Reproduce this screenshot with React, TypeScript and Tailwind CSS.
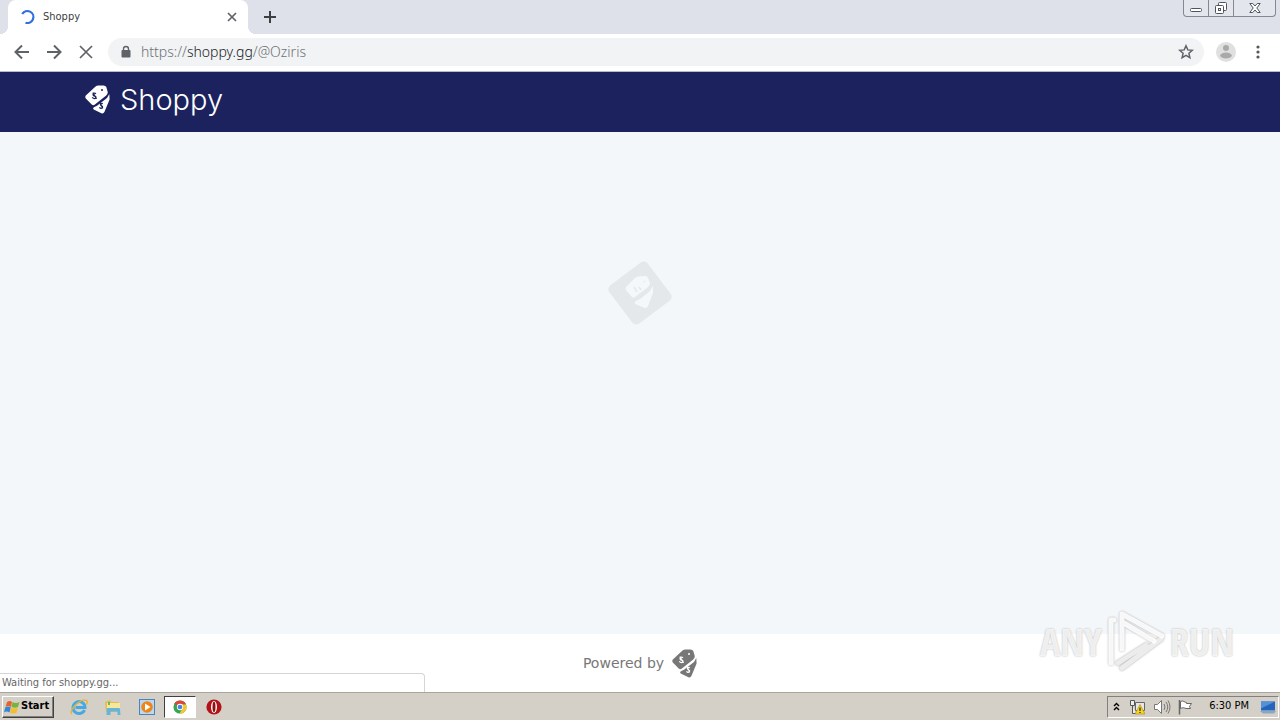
import React from "react";

const UI = "font-['Tahoma','DejaVu_Sans_Condensed','Noto_Sans',sans-serif]";

function Tags({ className, ink }: { className: string; ink: string }) {
  return (
    <svg viewBox="0 0 25 29" className={className} fill="currentColor" aria-hidden="true">
      <path d="M10 2Q11 .6 13 .5L18.500 .4Q20.500 .4 21.300 2L22.600 6.500Q23.200 9 21.200 10.500L9.600 19.800Q8 20.800 6.700 19.400L.8 13.600Q-.2 12 .8 10.600Z" />
      <path d="M24.300 9L24.600 14.500 19.400 27Q18.400 29 16.400 28.300L8.700 24.600Q7.400 23.400 8.800 22.200L12 20.800 22 13Z" />
      <circle cx="17" cy="5" r="1" fill={ink} />
      <g fill="none" stroke={ink} strokeWidth="1.200">
        <path d="M11 8.900C9.300 7.300 7.300 9 8.300 10.300S11.200 10.700 11 12.400 8.600 13.900 7.200 12.300M7.800 7.600l3.800 6.200" />
        <path d="M17.800 18.600C16 17.800 14.800 19.300 15.800 20.300S18 20.900 17.600 22.300 15.400 23.600 14.400 22.300M15.300 17.800l2.300 5.600" />
      </g>
    </svg>
  );
}

function TabStrip() {
  return (
    <div className="flex h-[34px] bg-[#dee1e9] pl-2">
      <div className="relative flex w-60 items-center rounded-t-lg bg-white pr-2 pl-3">
        <span className="absolute bottom-0 -left-2 h-2 w-2 bg-[radial-gradient(circle_at_0_0,#dee1e9_8px,white_8px)]" />
        <span className="absolute -right-2 bottom-0 h-2 w-2 bg-[radial-gradient(circle_at_100%_0,#dee1e9_8px,white_8px)]" />
        <svg viewBox="0 0 16 16" className="h-4 w-4" fill="none" stroke="#2f6fdf" strokeWidth="2.200" aria-hidden="true">
          <path d="M2.200 5A6 6 0 1 1 5.500 13.700" />
        </svg>
        <span className="ml-[7px] flex-1 text-[11px] text-[#3c4043]">Shoppy</span>
        <button aria-label="Close tab" className="flex h-4 w-4 items-center justify-center">
          <svg viewBox="0 0 10 10" className="h-[10px] w-[10px]" stroke="#5f6368" strokeWidth="1.700"><path d="M1 1l8 8M9 1L1 9" /></svg>
        </button>
      </div>
      <button aria-label="New tab" className="ml-4 flex w-3 items-center justify-center">
        <svg viewBox="0 0 12 12" className="h-3 w-3" stroke="#3c4043" strokeWidth="2"><path d="M6 0v12M0 6h12" /></svg>
      </button>
      <div className="mr-1 ml-auto flex h-[17px] overflow-hidden rounded-b-[4px] border border-t-0 border-[#85888f] bg-[#e3e6ec]">
        <button aria-label="Minimize" className="flex w-[25px] items-center justify-center border-r border-[#85888f]">
          <svg viewBox="0 0 24 16" className="h-4 w-6" fill="#fff" stroke="#50545c"><rect x="6.500" y="8.500" width="11" height="3" rx="1" /></svg>
        </button>
        <button aria-label="Restore" className="flex w-[25px] items-center justify-center border-r border-[#85888f]">
          <svg viewBox="0 0 14 14" className="h-[14px] w-[14px]" fill="#fff" stroke="#50545c"><rect x="4.500" y="1.500" width="8" height="8" rx="1" /><rect x="1.500" y="4.500" width="8" height="8" rx="1" /><rect x="4.500" y="7.500" width="2" height="2" /></svg>
        </button>
        <button aria-label="Close" className="flex w-[41px] items-center justify-center">
          <svg viewBox="0 0 12 12" className="h-3 w-3" fill="#fff" stroke="#50545c"><path d="M.8 1.500h3L6 4l2.200-2.500h3L7.800 6l3.400 4.500h-3L6 8l-2.200 2.500h-3L4.200 6z" /></svg>
        </button>
      </div>
    </div>
  );
}

function Toolbar() {
  return (
    <div className="flex h-[38px] items-center border-b border-[#b9bcc5] bg-white pr-[14px] pb-px pl-[14px]">
      <div className="flex gap-4 text-[#5f6368]">
        <button aria-label="Back"><svg viewBox="0 0 16 16" className="h-4 w-4" fill="none" stroke="currentColor" strokeWidth="2"><path d="M15 8H2M8 1.500L1.500 8 8 14.500" /></svg></button>
        <button aria-label="Forward"><svg viewBox="0 0 16 16" className="h-4 w-4" fill="none" stroke="currentColor" strokeWidth="2"><path d="M1 8h13M8 1.500L14.500 8 8 14.500" /></svg></button>
        <button aria-label="Stop"><svg viewBox="0 0 16 16" className="h-4 w-4" stroke="currentColor" strokeWidth="1.700"><path d="M2 2l12 12M14 2L2 14" /></svg></button>
      </div>
      <div className="ml-[14px] flex h-7 flex-1 items-center rounded-full bg-[#f1f3f4] pr-[10px] pl-3">
        <svg viewBox="0 0 12 14" className="h-[14px] w-3" aria-hidden="true"><rect x="1.500" y="5" width="9" height="7.500" rx="1" fill="#5f6368" /><path d="M3.500 5.500V4a2.500 2.500 0 0 1 5 0v1.500" fill="none" stroke="#5f6368" strokeWidth="1.400" /></svg>
        <a href="#" className="ml-[9px] flex-1 font-['Noto_Sans',sans-serif] text-[14px] leading-5 font-light text-[#6d7176]">
          https://<span className="text-[#202124]">shoppy.gg</span>/@Oziris
        </a>
        <button aria-label="Bookmark this page">
          <svg viewBox="0 0 16 16" className="h-4 w-4" fill="none" stroke="#5f6368" strokeWidth="1.500"><path d="M8 1.800l1.800 4.100 4.500.4-3.400 3 1 4.400L8 11.400l-3.900 2.300 1-4.400-3.400-3 4.500-.4z" /></svg>
        </button>
      </div>
      <button aria-label="Profile" className="ml-3">
        <svg viewBox="0 0 20 20" className="h-5 w-5"><circle cx="10" cy="10" r="10" fill="#e0e0e0" /><circle cx="10" cy="6" r="3" fill="#a9a9a9" /><ellipse cx="10" cy="13.500" rx="5.800" ry="3" fill="#a9a9a9" /></svg>
      </button>
      <button aria-label="Menu" className="ml-[14px]">
        <svg viewBox="0 0 16 16" className="h-4 w-4" fill="#55595e"><circle cx="8" cy="3" r="1.600" /><circle cx="8" cy="8" r="1.600" /><circle cx="8" cy="13" r="1.600" /></svg>
      </button>
    </div>
  );
}

function Watermark() {
  const text = "font-['Liberation_Sans_Narrow','Open_Sans_Condensed','Noto_Sans_ExtraCondensed','Roboto_Condensed','Liberation_Sans',sans-serif] text-[38px] font-light leading-none text-white/80 [text-shadow:0_0_2px_#aaa]";
  return (
    <div className="pointer-events-none absolute right-[46px] bottom-[19px] flex items-center gap-1">
      <span className={text}>ANY</span>
      <svg viewBox="0 0 60 64" className="h-16 w-[60px] drop-shadow-[0_0_1px_#aaa]" fill="none" strokeLinejoin="round" strokeLinecap="round" strokeWidth="5" aria-hidden="true">
        <path d="M12 54l28-18M16 59l39-29" stroke="#ececec" />
        <path d="M5 54V11h3M16 40V5L56 27M16 13l32 19" stroke="#fff" strokeOpacity=".9" />
      </svg>
      <span className={text}>RUN</span>
    </div>
  );
}

function Taskbar() {
  return (
    <div className="flex h-7 items-center border-t border-[#aaa69c] bg-[#d4d0c8] pl-[2px] text-[11px] text-black">
      <button className="flex h-[22px] w-[52px] items-center gap-px border border-t-white border-r-[#404040] border-b-[#404040] border-l-white pl-px text-[11px] font-bold shadow-[inset_-1px_-1px_0_#808080]">
        <svg viewBox="0 0 16 16" className="h-4 w-4" aria-hidden="true">
          <path d="M3 3q3-2 5 0L7 8Q4 6 1.500 8z" fill="#e8622c" /><path d="M8.600 3q3 2 6.900 0L14 8q-3 1.500-6.500 0z" fill="#79b33c" />
          <path d="M1.200 8.600q3-2 5.500 0l-1.200 5q-3-2-5.500 0z" fill="#3585d4" /><path d="M7.300 8.800q3 1.500 6.500 0l-1.200 5q-3 1.500-6.500 0z" fill="#f4bd2c" />
        </svg>
        <span>Start</span>
      </button>
      <nav className="ml-2 flex items-center" aria-label="Programs">
        <button aria-label="Internet Explorer" className="flex h-[22px] w-[34px] items-center justify-center">
          <svg viewBox="0 0 18 18" className="h-[18px] w-[18px]" fill="none"><path d="M14.500 12A6 6 0 1 1 15 9.500H5.500" stroke="#45a9e3" strokeWidth="3" /><path d="M2 16C-2 13 10 0 16.500 2.500q1.500 1 0 4" stroke="#e5b435" strokeWidth="1.400" /></svg>
        </button>
        <button aria-label="Explorer" className="flex h-[22px] w-[34px] items-center justify-center">
          <svg viewBox="0 0 18 18" className="h-[18px] w-[18px]"><path d="M1 4l5-2 1 2h7l2 2v8H2z" fill="#e3bd4e" /><path d="M3 5h13v6H3z" fill="#f8e69b" /><path d="M3.500 10h11.500q1 0 1 1l.5 6h-3v-3.500h-7V17H2.500l.3-6q0-1 .7-1z" fill="#63b5dd" /><path d="M4 4h2v3H4z" fill="#65b96d" /></svg>
        </button>
        <button aria-label="Media Player" className="flex h-[22px] w-[34px] items-center justify-center">
          <svg viewBox="0 0 16 16" className="h-4 w-4"><rect x=".5" y=".5" width="15" height="15" fill="#b9d8f2" stroke="#4d83b8" /><circle cx="8" cy="8" r="5.800" fill="#ee8518" /><path d="M6 4.500L11.500 8 6 11.500z" fill="#fff" /></svg>
        </button>
        <button aria-label="Chrome" className="flex h-[22px] w-8 items-center justify-center border border-t-[#404040] border-r-white border-b-white border-l-[#404040] bg-white">
          <svg viewBox="0 0 16 16" className="h-[14px] w-[14px]"><circle cx="8" cy="8" r="7.500" fill="#35a553" /><path d="M8 8L1.500 4.200A7.500 7.500 0 0 1 14.500 4.200L15 5H8z" fill="#df4637" /><path d="M8 5h7a7.500 7.500 0 0 1-7.500 10.500L11 9z" fill="#f5c62f" /><circle cx="8" cy="8" r="3.600" fill="#fff" /><circle cx="8" cy="8" r="2.700" fill="#4684e4" /></svg>
        </button>
        <button aria-label="Opera" className="flex h-[22px] w-9 items-center justify-center">
          <svg viewBox="0 0 16 16" className="h-4 w-4"><circle cx="8" cy="8" r="7.600" fill="#b31217" /><ellipse cx="8" cy="8" rx="3" ry="6" fill="#fff" /><ellipse cx="8" cy="8" rx="1.500" ry="5.200" fill="#8e1014" /></svg>
        </button>
      </nav>
      <div className="mr-px ml-auto flex h-[22px] items-center border border-t-[#808080] border-r-white border-b-white border-l-[#808080] pr-[2px] pl-1">
        <button aria-label="Show hidden icons"><svg viewBox="0 0 9 12" className="h-3 w-[9px]" fill="none" stroke="#000" strokeWidth="1.400"><path d="M2 5l2.500-2.500L7 5M2 9l2.500-2.500L7 9" /></svg></button>
        <svg viewBox="0 0 16 16" className="ml-2 h-4 w-4" role="img" aria-label="Network"><path d="M1.500 1.500h4v5h-4zM3.500 7v7.500H7" fill="#eee" stroke="#555" /><path d="M6.500 3.500h9v8h-9z" fill="#e7e7e7" stroke="#666" /><path d="M11 5.500l5 9.500H6z" fill="#f6d625" stroke="#aa8700" strokeWidth=".6" /><path d="M11 8.500v3.500M11 13v1" stroke="#222" strokeWidth="1.200" /></svg>
        <svg viewBox="0 0 18 16" className="ml-2 h-4 w-[18px]" fill="none" stroke="#777" role="img" aria-label="Volume"><path d="M1.500 5.500h3l4-4v13l-4-4h-3z" fill="#fff" /><path d="M11 5q2 3 0 6M13 3q3.500 5 0 10M15 1.500q4 6.500 0 13" /></svg>
        <svg viewBox="0 0 16 16" className="ml-[6px] h-4 w-4" role="img" aria-label="Action center"><path d="M2.500 1v14.500" stroke="#666" strokeWidth="1.500" /><path d="M3.500 2.500c3-1.500 4 1 6 1v1h5l-2 3 1 2H9c-2-1-3.500-1-5.500 0z" fill="#fff" stroke="#666" /></svg>
        <span className="ml-4 whitespace-nowrap">6:30 PM</span>
        <button aria-label="Show desktop" className="ml-[11px]"><svg viewBox="0 0 16 16" className="h-4 w-4"><path d="M1 2.500h14v9H1z" fill="#2464ba" /><path d="M1 2.500h14l-14 7z" fill="#5591d7" /><path d="M0 12h16l-2 2.500H3z" fill="#87a7c5" /></svg></button>
      </div>
    </div>
  );
}

export default function App() {
  return (
    <div className={`${UI} flex min-h-screen flex-col bg-white`}>
      <TabStrip />
      <Toolbar />
      <div className="relative flex flex-1 flex-col">
        <header className="flex h-[60px] items-start bg-[#1b225e] px-[85px] pt-[13px] text-white">
          <a href="#" className="flex items-center gap-[10px] font-['Inter','Liberation_Sans',sans-serif] text-[29px] leading-[29px] font-light">
            <Tags className="h-[29px] w-[25px]" ink="#1b225e" />
            <span>Shoppy</span>
          </a>
        </header>
        <main className="flex flex-1 justify-center bg-[#f3f7fa] pt-32">
          <svg viewBox="0 0 66 66" className="h-[66px] w-[66px]" role="img" aria-label="Loading">
            <rect x="9" y="9" width="48" height="48" rx="5" fill="#e4e8eb" transform="rotate(53 33 33)" />
            <g fill="#f5f8fb"><path d="M28 18q1-1 3-1.500l7-.5q2 0 3 2l2 5q0 2-2 4L28 37q-2 1-3 0l-6-7q-1-2 0-3z" /><path d="M46 26l0 7-5 13q-1 2-3 2l-10-4q-1-2 1-3l4-2 9-7z" /></g>
            <path d="M27 27l3 5M32 27l2 3M37 21l1 1" stroke="#e4e8eb" strokeWidth="1.500" />
          </svg>
        </main>
        <footer className="flex h-[58px] items-center justify-center gap-2 bg-white font-['DejaVu_Sans',sans-serif] text-[14px] text-[#777]">
          <span>Powered by</span>
          <Tags className="h-[29px] w-[25px]" ink="#fff" />
        </footer>
        <div className="absolute bottom-0 left-0 h-[19px] w-1/3 max-w-[425px] rounded-tr border-t border-r border-[#d5d5d5] bg-white pl-[2px] text-[11px] leading-[18px] text-[#666]">Waiting for shoppy.gg...</div>
        <Watermark />
      </div>
      <Taskbar />
    </div>
  );
}
